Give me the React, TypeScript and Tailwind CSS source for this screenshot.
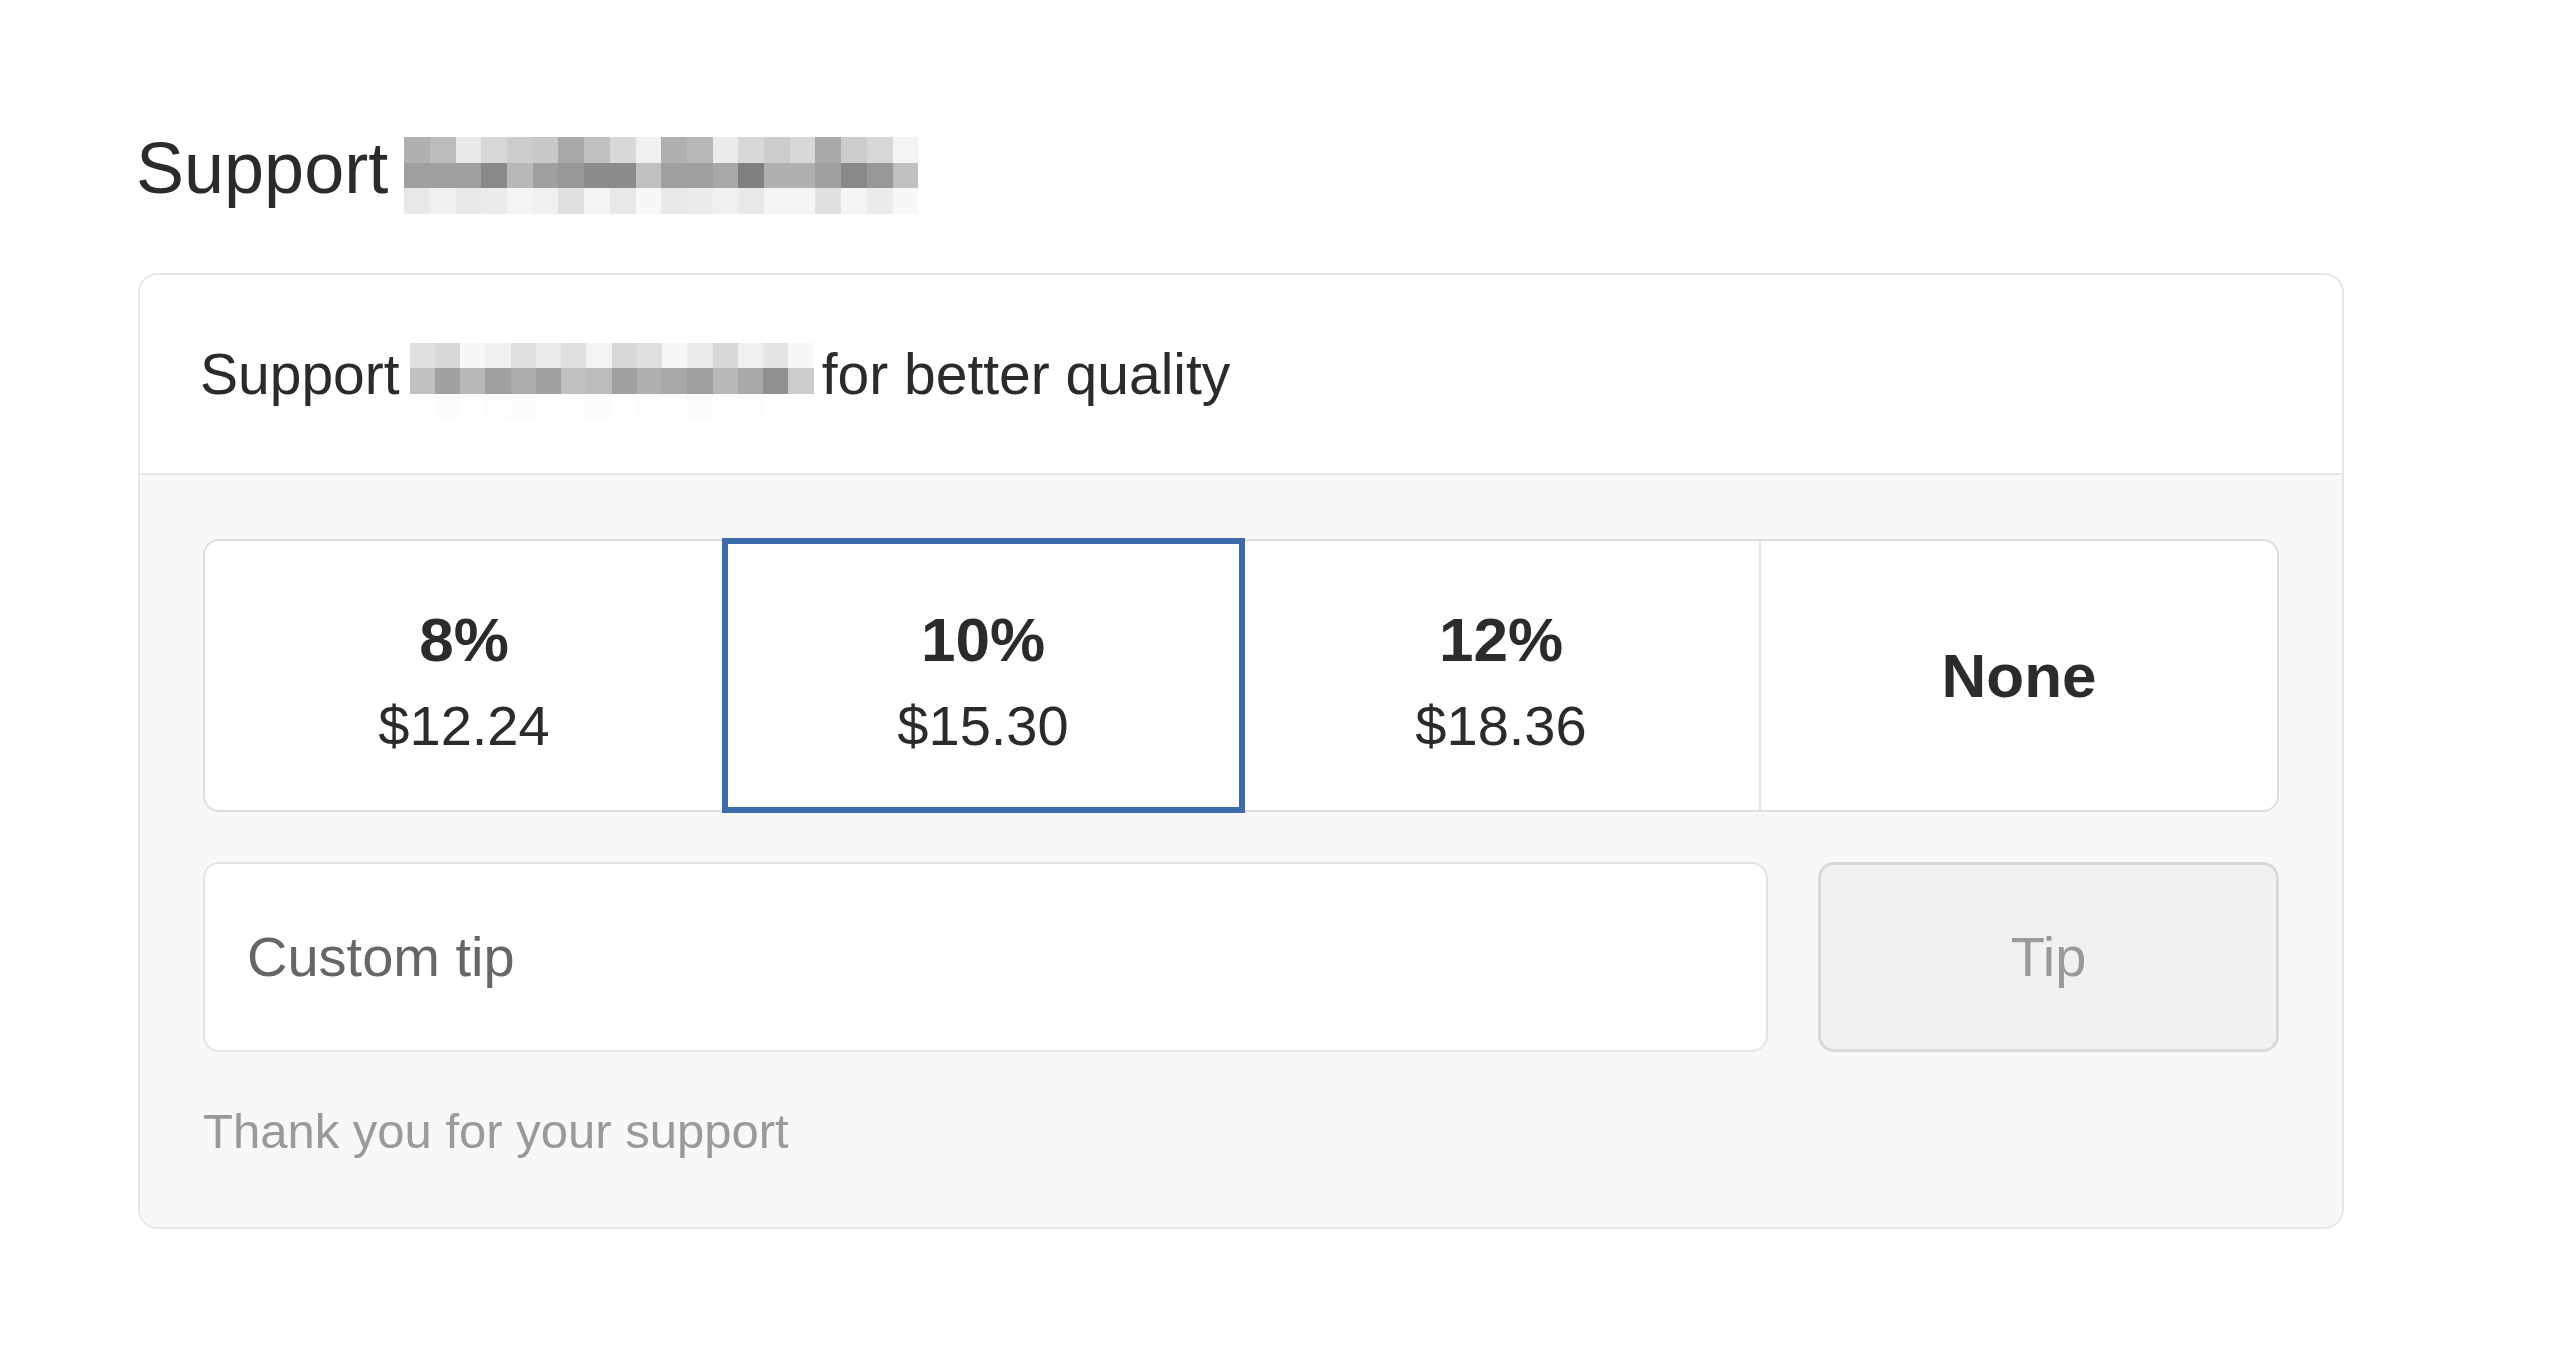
import { useState } from 'react'

const HEAD_MOSAIC = [
  ['#b0b0b0', '#bcbcbc', '#e8e8e8', '#d8d8d8', '#cccccc', '#c8c8c8', '#a8a8a8', '#c0c0c0', '#d8d8d8', '#f0f0f0', '#b0b0b0', '#b8b8b8', '#ececec', '#d8d8d8', '#cccccc', '#d8d8d8', '#a8a8a8', '#cccccc', '#d8d8d8', '#f4f4f4'],
  ['#a0a0a0', '#a0a0a0', '#a0a0a0', '#888888', '#b8b8b8', '#a0a0a0', '#989898', '#8c8c8c', '#8c8c8c', '#c0c0c0', '#a0a0a0', '#a0a0a0', '#a8a8a8', '#808080', '#b0b0b0', '#b0b0b0', '#a0a0a0', '#888888', '#989898', '#c0c0c0'],
  ['#e8e8e8', '#f0f0f0', '#e8e8e8', '#ececec', '#f4f4f4', '#f0f0f0', '#e0e0e0', '#f4f4f4', '#e8e8e8', '#f8f8f8', '#e8e8e8', '#ececec', '#f0f0f0', '#e8e8e8', '#f4f4f4', '#f4f4f4', '#e0e0e0', '#f4f4f4', '#ececec', '#f8f8f8'],
]

const CARD_MOSAIC = [
  ['#e0e0e0', '#d8d8d8', '#f8f8f8', '#f0f0f0', '#e0e0e0', '#ececec', '#e0e0e0', '#f4f4f4', '#d8d8d8', '#e0e0e0', '#f8f8f8', '#ececec', '#d8d8d8', '#f0f0f0', '#e4e4e4', '#f8f8f8'],
  ['#c0c0c0', '#a0a0a0', '#b8b8b8', '#a0a0a0', '#acacac', '#a0a0a0', '#c0c0c0', '#bcbcbc', '#a0a0a0', '#b0b0b0', '#a8a8a8', '#a0a0a0', '#b8b8b8', '#a8a8a8', '#909090', '#cccccc'],
  ['#ffffff', '#fcfcfc', '#ffffff', '#fdfdfd', '#fcfcfc', '#ffffff', '#fdfdfd', '#fcfcfc', '#ffffff', '#fdfdfd', '#ffffff', '#fcfcfc', '#ffffff', '#fdfdfd', '#ffffff', '#ffffff'],
]

const OPTIONS = [
  { pct: '8%', amount: '$12.24' },
  { pct: '10%', amount: '$15.30' },
  { pct: '12%', amount: '$18.36' },
  { pct: 'None', amount: '' },
]

// blurred name placeholder, drawn as a grid of gray blocks
function Mosaic({ rows, className }: { rows: string[][]; className: string }) {
  return (
    <div className={`flex flex-col shrink-0 ${className}`}>
      {rows.map((row, i) => (
        <div key={i} className="flex flex-1">
          {row.map((c, j) => (
            <div key={j} className="flex-1" style={{ backgroundColor: c }} />
          ))}
        </div>
      ))}
    </div>
  )
}

export default function App() {
  const [selected, setSelected] = useState(1)

  return (
    <div className="min-h-screen bg-white font-['Liberation_Sans',Arial,sans-serif] text-[#2b2b2b]">
      <div className="pl-[136px] pt-[128px]">
        {/* Title */}
        <h1 className="flex items-start h-[80px] text-[72px] leading-[80px] font-normal">
          <span>Support</span>
          <Mosaic rows={HEAD_MOSAIC} className="ml-[16px] mt-[9px] w-[514px] h-[77px]" />
        </h1>

        {/* Card */}
        <div className="mt-[65px] ml-[2px] w-[2206px] rounded-[20px] border-2 border-[#e6e6e6] overflow-hidden">
          <div className="flex items-center h-[198px] pl-[60px] pr-[63px] bg-white text-[57px] leading-[70px]">
            <span>Support</span>
            <Mosaic rows={CARD_MOSAIC} className="ml-[10px] mr-[8px] mt-[14px] w-[404px] h-[76px]" />
            <span>for better quality</span>
          </div>

          <div className="border-t-2 border-[#e8e8e8] bg-[#f8f8f8] px-[63px] pt-[64px] pb-[64px]">
            {/* Presets */}
            <div className="grid grid-cols-4 h-[273px] rounded-[16px] border-2 border-[#dedede] bg-white">
              {OPTIONS.map((o, i) => (
                <button
                  key={o.pct}
                  onClick={() => setSelected(i)}
                  className={`relative flex flex-col items-center justify-center ${i > 0 ? 'border-l-2 border-[#e3e3e3]' : ''}`}
                >
                  {selected === i && (
                    <div className="absolute z-10 -left-[3px] -right-[4px] -top-[3px] -bottom-[3px] border-[6px] border-[#3b6baa] pointer-events-none" />
                  )}
                  {o.amount ? (
                    <div className="flex flex-col items-center pt-[14px]">
                      <span className="text-[62px] leading-[86px] font-bold">{o.pct}</span>
                      <span className="text-[56px] leading-[86px]">{o.amount}</span>
                    </div>
                  ) : (
                    <span className="text-[62px] leading-[86px] font-bold">{o.pct}</span>
                  )}
                </button>
              ))}
            </div>

            {/* Custom amount */}
            <div className="flex gap-[50px] mt-[50px] h-[190px]">
              <input
                placeholder="Custom tip"
                className="flex-1 min-w-0 rounded-[16px] border-2 border-[#e3e3e3] bg-white pl-[42px] text-[56px] text-[#2b2b2b] placeholder:text-[#666666] outline-none"
              />
              <button className="w-[461px] rounded-[16px] border-[3px] border-[#d9d9d9] bg-[#f1f1f1] text-[56px] text-[#9a9a9a]">
                Tip
              </button>
            </div>

            <p className="mt-[47px] text-[49px] leading-[64px] text-[#9a9a9a]">Thank you for your support</p>
          </div>
        </div>
      </div>
    </div>
  )
}
